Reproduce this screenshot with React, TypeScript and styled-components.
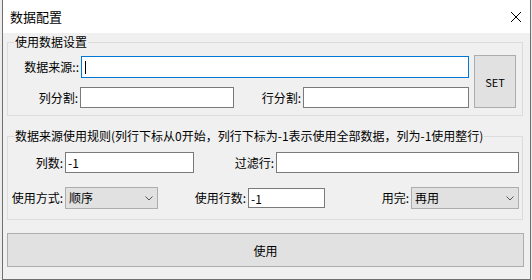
import React from "react";
import styled, { createGlobalStyle } from "styled-components";

const Global = createGlobalStyle`
  html, body { margin: 0; padding: 0; background: #ececec; }
  body {
    font-family: "Noto Sans CJK SC", "Noto Sans", sans-serif;
    font-size: 12px;
    color: #000;
  }
  * { box-sizing: border-box; }
`;

const Window = styled.div`
  margin-left: 2px;
  width: 529px;
  height: 280px;
  border: 1px solid #6f6f6f;
  border-top: none;
  background: #f0f0f0;
  display: flex;
  flex-direction: column;
`;

const TitleBar = styled.div`
  height: 33px;
  flex: none;
  background: #ffffff;
  display: flex;
  align-items: center;
  justify-content: space-between;
  padding-left: 7px;
`;

const Title = styled.span`
  font-size: 13px;
  line-height: 16px;
`;

const CloseIcon = styled.svg`
  width: 10px;
  height: 10px;
  margin-right: 9px;
  margin-top: 1px;
`;

const Body = styled.div`
  flex: 1;
  display: flex;
  flex-direction: column;
  align-items: flex-start;
  padding: 1px 0 0 4px;
`;

const Group = styled.fieldset<{ $mt: number; $pt: number; $pb: number }>`
  width: 516px;
  min-width: 0;
  margin: ${(p) => p.$mt}px 0 0 0;
  padding: ${(p) => p.$pt}px 0 ${(p) => p.$pb}px 0;
  border: 1px solid #dcdcdc;
`;

const Legend = styled.legend`
  margin-left: 6px;
  padding: 0 1px;
  font-size: 12px;
  line-height: 16px;
`;

const SourceArea = styled.div`
  display: flex;
  align-items: flex-start;
`;

const Fields = styled.div`
  width: 461px;
  display: flex;
  flex-direction: column;
`;

const Row = styled.div<{ $mt: number }>`
  display: flex;
  align-items: center;
  margin-top: ${(p) => p.$mt}px;
`;

const Label = styled.label<{ $w: number }>`
  width: ${(p) => p.$w}px;
  flex: none;
  margin-right: 2px;
  text-align: right;
  white-space: nowrap;
  line-height: 16px;
`;

const TextBox = styled.input<{ $w: number; $h: number }>`
  width: ${(p) => p.$w}px;
  height: ${(p) => p.$h}px;
  flex: none;
  border: 1px solid #7a7a7a;
  background: #ffffff;
  padding: 0 2px;
  font-family: inherit;
  font-size: 12px;
  color: #000;
  outline: none;
`;

const FocusedBox = styled.div<{ $w: number; $h: number }>`
  width: ${(p) => p.$w}px;
  height: ${(p) => p.$h}px;
  flex: none;
  border: 1px solid #0078d7;
  background: #ffffff;
  display: flex;
  align-items: center;
  padding-left: 3px;
`;

const Caret = styled.span`
  width: 1px;
  height: 13px;
  background: #000;
`;

const SetButton = styled.button`
  width: 42px;
  height: 53px;
  flex: none;
  margin-left: 5px;
  background: #e1e1e1;
  border: 1px solid #adadad;
  font-family: inherit;
  font-size: 11px;
  color: #000;
  padding: 0;
`;

const ComboBox = styled.div<{ $w: number }>`
  width: ${(p) => p.$w}px;
  height: 22px;
  flex: none;
  background: #e1e1e1;
  border: 1px solid #adadad;
  display: flex;
  align-items: center;
  justify-content: space-between;
  padding: 0 4px 0 3px;
  line-height: 16px;
`;

const Chevron = styled.svg`
  width: 8px;
  height: 5px;
`;

const UseButton = styled.button`
  margin-top: 13px;
  width: 517px;
  height: 34px;
  background: #e1e1e1;
  border: 1px solid #adadad;
  font-family: inherit;
  font-size: 12px;
  color: #000;
  padding: 0;
`;

const Combo = ({ w, value }: { w: number; value: string }) => (
  <ComboBox $w={w}>
    <span>{value}</span>
    <Chevron viewBox="0 0 8 5">
      <path d="M0.5 0.5 L4 4 L7.5 0.5" fill="none" stroke="#555" strokeWidth="1" />
    </Chevron>
  </ComboBox>
);

export default function App() {
  return (
    <>
      <Global />
      <Window>
        <TitleBar>
          <Title>数据配置</Title>
          <CloseIcon viewBox="0 0 10 10">
            <path d="M0 0 L10 10 M10 0 L0 10" stroke="#000" strokeWidth="1" />
          </CloseIcon>
        </TitleBar>
        <Body>
          <Group $mt={0} $pt={5} $pb={7}>
            <Legend>使用数据设置</Legend>
            <SourceArea>
              <Fields>
                <Row $mt={1}>
                  <Label $w={71}>数据来源::</Label>
                  <FocusedBox $w={388} $h={22}>
                    <Caret />
                  </FocusedBox>
                </Row>
                <Row $mt={9}>
                  <Label $w={70}>列分割:</Label>
                  <TextBox $w={154} $h={21} readOnly value="" />
                  <Label $w={67}>行分割:</Label>
                  <TextBox $w={166} $h={21} readOnly value="" />
                </Row>
              </Fields>
              <SetButton>SET</SetButton>
            </SourceArea>
          </Group>
          <Group $mt={12} $pt={8} $pb={10}>
            <Legend>数据来源使用规则(列行下标从0开始，列行下标为-1表示使用全部数据，列为-1使用整行)</Legend>
            <Row $mt={0}>
              <Label $w={55}>列数:</Label>
              <TextBox $w={129} $h={21} readOnly value="-1" />
              <Label $w={80}>过滤行:</Label>
              <TextBox $w={243} $h={21} readOnly value="" />
            </Row>
            <Row $mt={14}>
              <Label $w={55}>使用方式:</Label>
              <Combo w={93} value="顺序" />
              <Label $w={88}>使用行数:</Label>
              <TextBox $w={77} $h={20} readOnly value="-1" />
              <Label $w={84}>用完:</Label>
              <Combo w={108} value="再用" />
            </Row>
          </Group>
          <UseButton>使用</UseButton>
        </Body>
      </Window>
    </>
  );
}
